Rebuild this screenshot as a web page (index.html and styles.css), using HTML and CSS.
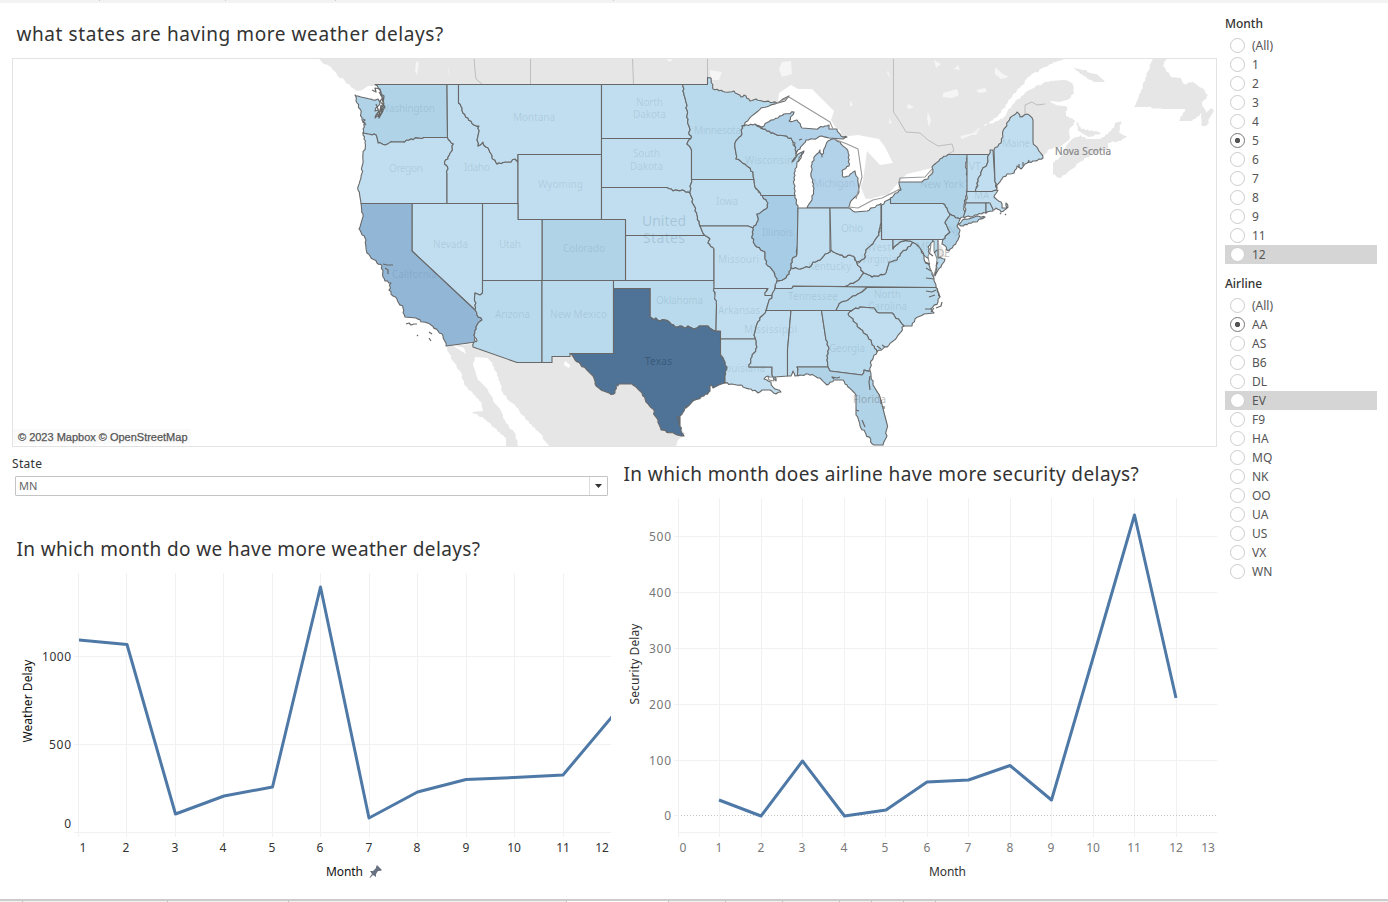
FILE: index.html
```html
<!DOCTYPE html>
<html lang="en">
<head>
<meta charset="utf-8">
<title>Flight delays</title>
<link rel="stylesheet" href="styles.css">
</head>
<body>
<div class="topstrip"><i></i><i></i><i></i><i></i></div>
<div class="dashboard">
<main class="content">
<h1 class="title title-map">what states are having more weather delays?</h1>
<svg class="map" viewBox="12 58 1205 389" width="1205" height="389">
<g class="land">
<path d="M317 58L324 64 331 67 337 75 345 81 352 88 358 91 367 92 374 96 380 90 385 100 640 100 700 100 745 120 790 100 840 130 850 160 866 200 905 192 960 180 1000 160 1042 157 1050 149 1060 147 1070 138 1069 130 1076 121 1066 116 1067 107 1056 105 1050 101 1060 102 1069 99 1074 92 1073 84 1064 80 1050 81 1036 86 1025 93 1013 104 1004 117 997 121 984 126 969 136 981 128 998 116 1010 99 1021 86 1030 76 1048 66 1058 61 1071 58Z"/>
<path d="M1073 68L1084 70 1098 75 1105 82 1094 82 1084 76Z"/>
<path d="M1153 58L1167 58 1163 66 1171 77 1181 78 1184 84 1193 82 1202 88 1208 95 1202 103 1206 113 1211 108 1214 111 1206 126 1201 125 1202 113 1192 121 1179 121 1185 109 1163 109 1148 107 1134 107 1139 96 1144 82Z"/>
<path d="M1074 138L1081 135 1086 139 1100 139 1108 134 1117 122 1121 121 1119 132 1127 136 1121 141 1108 143 1108 150 1092 154 1080 162 1067 173 1059 178 1053 174 1053 163 1061 156 1066 147Z"/>
<path d="M1077 122L1081 129 1096 131 1101 133 1089 137 1078 131Z"/>
<path d="M446 346L473 344 600 350 660 400 685 434 679 439 675 447 550 447 538 431 525 418 516 407 503 394 500 382 494 367 488 358 475 357 473 364 478 380 488 390 493 400 501 411 506 423 514 432 519 447 506 447 506 438 495 428 486 420 472 412 483 411 481 402 464 384 460 371 452 360Z"/>
<path d="M938 240L946 257 938 258Z"/>
</g>
<g class="patch">
<path d="M416 61l3 2-2 12-2-4zM448 67l2 12-2-8zM666 59l8-1-4 4zM710 70l12 2-3 8-8 0zM782 62l9-1 1 13-10 3-3-8zM850 100l3 5-3 2zM908 104l6 3-5 2-2-2zM928 112l3 8-2 7-2-9zM943 93l14-4 2 6-7 3-9-1zM976 90l9-2 2 4-8 1zM995 67l8 7 6 3-8 2-6-5zM934 60l7 4-5 4zM954 69l4-4 2 5zM888 70l2 8-3-5zM889 118l3 5-3 1zM972 135l7-5-3 5zM960 136l18-4-16 7z"/>
<path d="M740 127L752 113 762 108 778 102 779 93 791 85 798 89 812 89 821 98 829 106 834 111 831 120 837 130 841 137 858 135 879 139 885 147 893 163 880 165 867 151 863 181 855 200 850 207 868 209 900 190 889 194 873 198 861 207 862 199 885 198 899 182 907 174 932 168 928 177 922 183 905 184 899 183 898 190 880 204 866 215 852 214 845 180 835 150 829 142 820 155 816 165 812 183 815 198 808 209 798 208 793 190 797 166 804 157 798 150 795 138 768 130Z"/>
<path d="M368 86L381 86 387 101 383 113 375 116 378 101 366 99 356 94Z"/>
<path d="M452 345l12 3 2 6-6-4zM565 361l5 4-1 3-5-3z"/>
</g>
<g class="province">
<path d="M474 58L475 70 476 79 482 84M530.5 58V84M632.5 58L633.5 84M707.5 58V78M893.5 58V112L900 122 906 132 920 133 928 140 938 146 952 144 954 151 948 154M1020 117L1025 114 1025 105 1032 102 1037 105 1045 104"/>
</g>
<g class="states">
<path class="s3" d="M355 95L356 101 360 109 362 120 365 123 363 133 368 134 376 135 378 143 385 145 393 142 402 142 411 139 424 137.5 447.5 137.5 447 84.5 375 84.5 380 90 382 97 384 103 381 114 375 118 379 110 375 111 380 103 378 99 373 100 358 96Z"/>
<path class="s1" d="M363 133L368 134 376 135 378 143 385 145 393 142 402 142 411 139 424 137.5 447.5 137.5 450 141 453.5 144 451 152 448 157 444.5 164 448 169 447 174 447 203.5 361 203.5 358 190 361 178 363 160 365 143Z"/>
<path class="s1" d="M447 84.5H458.5V103L462 108 463 113 474 125 479 126 477 140 478 146 483 142 486 147 489 150 492 158 495 160 497 164 505 162 511 162 515 159 518 162V203.5H447V174L448 169 444.5 164 448 157 451 152 453.5 144 450 141 447.5 137.5Z"/>
<path class="s1" d="M458.5 84.5H601.5V154.5H518V162L515 159 511 162 505 162 497 164 495 160 492 158 489 150 486 147 483 142 478 146 477 140 479 126 474 125 463 113 462 108 458.5 103Z"/>
<path class="s1" d="M518 154.5H601.5V219.5H518Z"/>
<path class="s1" d="M601.5 84.5H683L684 95 687 110 688 124 691 138.5H601.5Z"/>
<path class="s1" d="M601.5 138.5H691L687 144 691.5 150V179.5L690 193 682 190 673 191 667 187.5H601.5Z"/>
<path class="s1" d="M601.5 187.5H667L673 191 682 190 690 193 697 215 700 226 705 235.5H625.5V219.5H601.5Z"/>
<path class="s1" d="M625.5 235.5H705L710 239 708 243 714 249V280.5H625.5Z"/>
<path class="s3" d="M542 219.5H625.5V280.5H542Z"/>
<path class="s1" d="M482.5 203.5H518V219.5H542V280.5H482.5Z"/>
<path class="s1" d="M412 203.5H482.5V293L480 295 475 293 474.5 298 476 303 475 310 412 251Z"/>
<path class="s5" d="M361 203.5L363 214 359 229 366 240 367 253 370 256 377 263 382 266 383 277 385 281 391 283 389 290 393 296 397 299 403 308 405 317 416 318 423 322 431 325 438 331 443 336 446 346 476 342 474 335 477 325 482 320 477 315 475 310 412 251V203.5Z"/>
<path class="s2" d="M482.5 280.5H542V362.5H517L473 347 474 342 477 341 474 335 477 325 482 320 477 315 475 310 476 303 474.5 298 475 293 480 295 482.5 293Z"/>
<path class="s2" d="M542 280.5H613.5V353.5H570V356.5H552V362.5H542Z"/>
<path class="s2" d="M613.5 280.5H714L714.5 289 716.5 305 716 331 708 326 699 326 693 329 688 326 684 328 680 326 675 327 671 324 665 320 660 321 656 318 653 319 650 317V288.5H613.5Z"/>
<path class="s6" d="M613.5 288.5H650V317L653 319 656 318 660 321 665 320 671 324 675 327 680 326 684 328 688 326 693 329 699 326 708 326 716 331 720.5 331V353L724 360 727 367 725 376 725 383 713 388 710 385 710 391 704 396 695 400 687 407 684 411 680 416 680 424 681 430 684 436 675 434 661 430 658 420 655 416 653 409 646 402 642 393 637 388 632 384 619 384 616 386 615 393 611 394.5 600 389 595 384 593 376 586 369 575 360 570 353.5H613.5Z"/>
<path class="s2" d="M683 84.5H707.5V77.5L711 78 713 89 725 92 734 91 741 97 744 95 750 101 756 99 762 101 777 103 769 106 761 108 749 119 742 126 741 136 735 143 736 159 745 164 753 172 754 179.5H691.5V150L687 144 691 138.5 688 124 687 110 684 95Z"/>
<path class="s1" d="M691.5 179.5H754L755 187 762 195 768 203 766 209 757 214 758 221 753 228 748 226H700L697 215 690 193Z"/>
<path class="s1" d="M700 226H748L753 228 752 238 757 247 765 252 765 259 768 266 774 272 778 280 775 288 772 295.5H764L768 288.5H714V249L708 243 710 239 705 235.5Z"/>
<path class="s1" d="M714 288.5H767L765 295.5H772L766 310.5 762 316 757 324 754 335 755.5 339H720.5V331L716 331 716.5 305Z"/>
<path class="s1" d="M720.5 339H755.5L757 347 752 357 749 367H772L772 375 775 377 776 381 768 376 764 379 771 382 773 387 781 392 776 394 770 390 762 390 758 393 751 389 743 387 740 385 731 384 725 383 725 376 727 367 724 360 720.5 353Z"/>
<path class="s1" d="M766 310.5H791L787.5 350V376L775 377 772 375 772 367H749L752 357 757 347 755.5 339 754 335 757 324 762 316Z"/>
<path class="s1" d="M791 310.5H821.5L826 340 829 349 827 360 828 367H797L799 375 795 376 793 371 791 376H787.5V350Z"/>
<path class="s2" d="M766 310.5H836L839 304 846 301 853 296 860 293 867 287 793 286 791 288.5H775L772 295.5Z"/>
<path class="s1" d="M777 281L784 279 789 274 791 268 800 269 811 266 813 262 820 260 825 254 830 252 831 250 838 254 846 257 850 255 853 256 857 263 864 273 857 281 845 286.5 793 286 791 288.5H775Z"/>
<path class="s4" d="M761 195.5H795L798 208V242L797 254 792 260 791 268 789 274 784 279 777 281 774 272 768 266 765 259 765 252 757 247 752 238 753 228 758 221 757 214 766 209 768 203 762 195Z"/>
<path class="s2" d="M761 195.5L755 187 754 179.5 753 172 745 164 736 159 735 143 741 136 742 126 755 124 763 129 775 134 791 138 796 149 796 157 792 162 800 153 804 151 799 158 795 169 794 184 795 195.5Z"/>
<path class="s3 lake" d="M756 125L762 127 771 120 778 118 784 114 794 112 789 121 797 120 802 128 815 129 825 126 829 125 829 129 837 129 841 136 847 137 843 139 829 138 822 136 813 139 806 140 800 149 796 154 795 143 791 138 775 134 763 129Z"/>
<path class="s3 lake" d="M832 139L840 142 848 151 849 166 842 171 843 177 849 176 855 171 858 178 859 192 850 203 848 208H807L812 200 814 188 811 176 812 162 817 154 820 150 822 157 824 149 828 141Z"/>
<path class="s1" d="M798 208H830V252L825 254 820 260 813 262 811 266 800 269 791 268 792 260 797 254Z"/>
<path class="s1" d="M830 208H848L855 212 867 211 881 203.5V223L879 235 873 244 866 250 864 259 857 262 853 256 850 255 846 257 838 254 831 250Z"/>
<path class="s1" d="M881.5 205L891 198V203.5H943L947 208 950 214 945 223 950 232 943 239.5H881.5Z"/>
<path class="s3" d="M890.5 198L901 190 899 182 922 182 928 179 933 172 932 167 940 159 948 154.5H967L966 165 968 179 967 190 964 205 965 216 960 219 950 214 947 208 943 203.5H890.5Z"/>
<path class="s3" d="M958 224L965 219 977 216 985 217 975 222 961 226Z"/>
<path class="s3" d="M950 214L960 219 957 226 960 230 958 240 949 251 942 244 943 239.5 950 232 945 223Z"/>
<path class="s2" d="M864 273L872 277 885 274 889 262 897 260 902 252 907 249 913 241 921 248 924 259 930 268 934 278 936 287.5 845 286.5 857 281Z"/>
<path class="s1" d="M881.5 223V239.5H893V249L900 242 908 241 913 241 907 249 902 252 897 260 889 262 885 274 872 277 864 273 857 263 864 259 866 250 873 244 879 235Z"/>
<path class="s2" d="M893 239.5H938V258L945 259 941 267 935 276 937 263 933 252 933 240 928 247 932 262 924 255 916 244 908 241 900 242 893 249Z"/>
<path class="s2" d="M836 310.5H852L860 307 874 308 879 313H892L904 326H912L915 319 924 314 934 313 931 309 938 302 940 297 936 287.5H867L860 293 853 296 846 301 839 304Z"/>
<path class="s1" d="M852 310.5L860 307 874 308 879 313H892L904 326 897 337 889 345 877 352 868 337 859 328 848 314Z"/>
<path class="s2" d="M821.5 310.5H852L848 314 859 328 868 337 877 352 871 361 870 371 864 370 862 375 830 371 828 367 827 360 829 349 826 340Z"/>
<path class="s3" d="M797 367H828L830 371 862 375 864 370 870 371 873 385 880 397 887 424 886 438 883 445H874L866 434 860 426 856 415 856 395 848 387 843 380 834 380 827 385 820 378 808 374 798 376Z"/>
<path class="s1" d="M967 154.5H989L987 164 982 170 978 179 976 191.5H967Z"/>
<path class="s1" d="M989 154.5L990 150 993 150 995 182 997 188 992 192H976L978 179 982 170 987 164Z"/>
<path class="s1" d="M994 150L1001 143 1003 131 1010 118 1017 112 1020 117 1027 114 1033 120V142L1038 149 1043 158 1035 161 1025 164 1021 169 1017 166 1014 173 1007 174 998 184 997 188 995 182Z"/>
<path class="s1" d="M967 191.5H992L998 190 994 197 1001 202 1002 208 1007 208 1006 203 1008 207 1001 212 996 208 992 210 989 203H966Z"/>
<path class="s2" d="M966 203H986V213L975 215 964 218Z"/>
<path class="s2" d="M986 203H990L993 211 986 213Z"/>
<path class="bay" d="M931 243l3-2 0 10 3 8-1 9-2 8-4-8-2-12 2-4zM768 377l5 0 1 4-5-1z"/>
<path class="inlet" d="M372 90l4 2-1-4 5 1 1 5 3 2-1 8 2 3-5 8-1 2 2-12M379 92l4 6-3 3 3 4-3 7M376 104l3 8-3 4M381 105l2 6-4 7-1-4M363 119l2 1-2 2 3 3M383 264l4 1 6 0M385 268l3 2 0 4M406 324l3-1 2 2 3-1 3 0M417 335l1 1M429 332l3 2M429 338l2 3M778 103l5-4 6-3-4 5zM679 416l-2 2 3 1M678 420l2 6M687 408l-2-2M693 401l-1-2M870 376l-1 6 1 8M856 410l3 1M862 420l3 7M881 400l0 4M884 409l0-3M834 379l-2-2 5 1 3-1M929 253l4 3M925 262l5 2M926 268l5 3M926 278l8 1M937 250l-3 3M938 262l-2 4M926 291l6 1 4-2M929 297l6-2M925 309l6 0M931 312l3-4M936 308l5-2 1-4M937 289l3 8M1000 213l1 1M1005 214l1 1M802 152l-1 6-3 4M799 140l3-1M881 349l-4-3M885 347l-3-2M1019 168l0-4M1023 166l0-4M1028 163l1-3"/>
<path class="border" d="M777 103L789 97 830 122 833 129M834 139L847 144 858 149 862 177 856 199M848 207L858 208 873 200 882 198 900 189M899 182L900 178 925 177 932 169"/>
</g>
<g class="labels">
<text x="380" y="112" textLength="55">Washington</text><text x="389" y="172" textLength="34">Oregon</text><text x="464" y="171" textLength="26">Idaho</text><text x="513" y="121" textLength="42">Montana</text><text x="538" y="188" textLength="45">Wyoming</text><text x="636" y="105.500" textLength="27">North</text><text x="633" y="118" textLength="33">Dakota</text><text x="633" y="157" textLength="27">South</text><text x="630" y="169.500" textLength="33">Dakota</text><text x="694" y="134" textLength="47">Minnesota</text><text x="745" y="164" textLength="48">Wisconsin</text><text x="813" y="187" textLength="42">Michigan</text><text x="716" y="205" textLength="22">Iowa</text><text x="762" y="236" textLength="31">Illinois</text><text x="841" y="232" textLength="22">Ohio</text><text x="920" y="188" textLength="44">New York</text><text x="433" y="248" textLength="35">Nevada</text><text x="499" y="248" textLength="22">Utah</text><text x="563" y="252" textLength="42">Colorado</text><text x="392" y="278" textLength="45">California</text><text x="495" y="318" textLength="35">Arizona</text><text x="550" y="318" textLength="57">New Mexico</text><text x="656" y="304" textLength="47">Oklahoma</text><text x="718" y="263" textLength="41">Missouri</text><text x="718" y="314" textLength="42">Arkansas</text><text x="744" y="333" textLength="53">Mississippi</text><text x="720" y="372" textLength="45">Louisiana</text><text class="tx" x="645" y="365" textLength="27">Texas</text><text x="788" y="300" textLength="50">Tennessee</text><text x="808" y="270" textLength="43">Kentucky</text><text x="867" y="251" textLength="24">West</text><text x="861" y="263" textLength="36">Virginia</text><text x="874" y="298" textLength="27">North</text><text x="868" y="310" textLength="39">Carolina</text><text x="829" y="352" textLength="36">Georgia</text><text x="853" y="403" textLength="33" class="out">Florida</text><text x="1002" y="147" textLength="28">Maine</text><text x="969" y="170">VT</text><text x="974" y="199">MA</text><text x="916" y="250">MD</text><text x="948" y="234">NJ</text><text x="937" y="257" class="out">DE</text>
<text class="country" x="642" y="226" textLength="44">United</text><text class="country" x="643" y="243" textLength="42">States</text>
<text class="nova" x="1055" y="155" textLength="56">Nova Scotia</text>
</g>
<rect class="credit-bg" x="13" y="429" width="178" height="15"/>
<text class="credit" x="18" y="441" textLength="169.500">© 2023 Mapbox © OpenStreetMap</text>
<rect class="frame" x="12.500" y="58.500" width="1204" height="388"/>
</svg>
<div class="lower">
<section class="left">
<div class="param-label">State</div>
<div class="select"><span>MN</span><b><svg width="7" height="4" viewBox="0 0 7 4"><path d="M0 0H7L3.500 4Z"/></svg></b></div>
<h2 class="title title-weather">In which month do we have more weather delays?</h2>
<svg class="chart" viewBox="12 565 600 325" width="600" height="325">
<path class="grid" d="M78.500 573V837M126.500 573V837M175.500 573V837M223.500 573V837M272.500 573V837M320.500 573V837M369.500 573V837M417.500 573V837M466.500 573V837M514.500 573V837M563.500 573V837M74 656.500H611M74 744.500H611M74 832.500H611"/>
<svg x="79" y="573" width="532" height="264" viewBox="79 573 532 264"><path class="line" d="M77 640L79 640 127 644.500 175.500 814 224 796 272.500 787 320.500 587 369 818 417.500 792 466 779.500 514 777.500 563 775 611 718 613 715.500"/></svg>
<g class="axis dark"><g class="end"><text x="71" y="661" textLength="29">1000</text><text x="71" y="749" textLength="22">500</text><text x="71" y="828">0</text></g>
<text x="83" y="852">1</text><text x="126" y="852">2</text><text x="175" y="852">3</text><text x="223" y="852">4</text><text x="272" y="852">5</text><text x="320" y="852">6</text><text x="369" y="852">7</text><text x="417" y="852">8</text><text x="466" y="852">9</text><text x="514" y="852">10</text><text x="563" y="852">11</text><text x="602" y="852">12</text>
<text class="name" x="344.500" y="876" textLength="37">Month</text><text class="name" transform="translate(32 701) rotate(-90)" textLength="83">Weather Delay</text></g>
<path class="pin" d="M377 865L382 870 380 871 378 871 376 874 376 877 373 875 370 878 369.500 877.500 372 874 370 871 373 871 376 868 376 867Z"/>
</svg>
</section>
<section class="right">
<h2 class="title title-security">In which month does airline have more security delays?</h2>
<svg class="chart" viewBox="620 490 597 400" width="597" height="400">
<path class="grid" d="M678.500 498V837M719.500 498V837M761.500 498V837M802.500 498V837M844.500 498V837M885.500 498V837M927.500 498V837M968.500 498V837M1010.500 498V837M1051.500 498V837M1093.500 498V837M1134.500 498V837M1176.500 498V837M674 536.500H1217M674 592.500H1217M674 648.500H1217M674 704.500H1217M674 760.500H1217M674 815.500H679M678 832.500H1217"/>
<path class="zero" d="M681 815.500H1217"/>
<path class="line" d="M719 800L761 816 802.500 761 844.500 816 886 810 927 782 968.500 780 1010 765.500 1051.500 800 1093 658 1134.500 515 1176 698"/>
<g class="axis"><g class="end"><text x="671" y="541" textLength="22">500</text><text x="671" y="597" textLength="22">400</text><text x="671" y="653" textLength="22">300</text><text x="671" y="709" textLength="22">200</text><text x="671" y="765" textLength="22">100</text><text x="671" y="820">0</text></g>
<text x="683" y="852">0</text><text x="719" y="852">1</text><text x="761" y="852">2</text><text x="802" y="852">3</text><text x="844" y="852">4</text><text x="885" y="852">5</text><text x="927" y="852">6</text><text x="968" y="852">7</text><text x="1010" y="852">8</text><text x="1051" y="852">9</text><text x="1093" y="852">10</text><text x="1134" y="852">11</text><text x="1176" y="852">12</text><text x="1208" y="852">13</text>
<text class="name" x="947.500" y="876" textLength="37">Month</text><text class="name" transform="translate(639 664) rotate(-90)" textLength="81">Security Delay</text></g>
</svg>
</section>
</div>
</main>
<aside class="filters">
<h3>Month</h3>
<ul><li>(All)</li><li>1</li><li>2</li><li>3</li><li>4</li><li class="on">5</li><li>6</li><li>7</li><li>8</li><li>9</li><li>11</li><li class="hl">12</li></ul>
<h3>Airline</h3>
<ul><li>(All)</li><li class="on">AA</li><li>AS</li><li>B6</li><li>DL</li><li class="hl">EV</li><li>F9</li><li>HA</li><li>MQ</li><li>NK</li><li>OO</li><li>UA</li><li>US</li><li>VX</li><li>WN</li></ul>
</aside>
</div>
<div class="tabs"><i class="w22"></i><i class="w145"></i><i class="w121"></i><i class="w278"></i><i class="active"></i><i class="w57"></i><i class="w57"></i><i class="w57"></i><i class="w32"></i><i class="w32"></i><i class="w32"></i></div>
<script src="coast.js"></script>
</body>
</html>
```
FILE: styles.css
```css
* { box-sizing: border-box; }
body { margin: 0; width: 1388px; height: 902px; overflow: hidden; background: #fff; color: #333; font-family: "Noto Sans", "Open Sans", sans-serif; font-size: 12px; display: flex; flex-direction: column; }
.topstrip { height: 3px; flex: none; background: #f3f3f3; display: flex; }
.topstrip i { width: 110px; height: 1px; border-right: 1px solid #ccc; }
.topstrip i:first-child { width: 100px; }
.topstrip i:nth-child(2) { width: 126px; }
.topstrip i:nth-child(4) { width: 278px; }
.dashboard { display: flex; gap: 8px; height: 896px; flex: none; }
.content { width: 1217px; padding-left: 12px; }
.title { margin: 0; font-weight: 400; font-size: 19px; line-height: 30px; color: #333; white-space: nowrap; }
.title-map { height: 55px; padding: 16px 0 0 4.5px; letter-spacing: .58px; }
.map { display: block; }
.lower { display: flex; }
.left { width: 608px; padding-top: 9px; }
.right { width: 597px; padding-top: 12px; }
.param-label { height: 20px; line-height: 16px; letter-spacing: .3px; }
.select { width: 593px; height: 20px; margin-left: 3px; border: 1px solid #c4c4c4; border-radius: 1px; display: flex; color: #666; line-height: 18px; padding-left: 3px; font-size: 11px; }
.select span { flex: 1; }
.select b { width: 18px; border-left: 1px solid #ddd; display: flex; align-items: center; justify-content: center; }
.select path { fill: #333; }
.title-weather { padding-left: 4.5px; margin-top: 38px; height: 31px; letter-spacing: .36px; }
.title-security { padding-left: 3.5px; height: 31px; letter-spacing: .41px; }
.chart { display: block; }
.grid { fill: none; stroke: #f1f1f1; }
.zero { stroke: #c4c4c4; stroke-dasharray: 1 2; }
.line { fill: none; stroke: #4e79a7; stroke-width: 3; stroke-linejoin: round; }
.axis { font-size: 12px; fill: #787878; text-anchor: middle; }
.dark { fill: #333; }
.end { text-anchor: end; }
.axis .name { fill: #333; }
.dark .name { fill: #111; }
.pin { fill: #687282; }
.land path { fill: #e6e6e6; }
.patch path { fill: #fff; }
.patch path:first-child { fill: #f5f5f5; }
.province { fill: none; stroke: #bebebe; }
.states path { stroke: #686868; stroke-width: 1.1; stroke-linejoin: round; }
.states .s1 { fill: #c0deef; }
.states .s2 { fill: #b9daec; }
.states .s3 { fill: #b0d3e8; }
.states .s4 { fill: #a7cce5; }
.states .s5 { fill: #92b6d6; }
.states .s6 { fill: #4e7397; }
.states .lake { fill: #b2d2ea; }
.states .bay { fill: #fff; stroke-width: .8; }
.states .inlet { fill: none; stroke-width: 1.2; }
.states .border { fill: none; stroke: #999; }
.labels { font-size: 10px; fill: #4b6a85; fill-opacity: .17; }
.labels .country { font-size: 14px; fill-opacity: .22; }
.labels .nova { fill: #888; fill-opacity: 1; stroke: #888; stroke-width: .2; }
.labels .out { fill: #777; fill-opacity: .5; }
.labels .tx { fill: #1c3048; fill-opacity: .4; }
.credit-bg { fill: #fafafa; }
.credit { font: 11px "Liberation Sans", sans-serif; fill: #555; stroke: #555; stroke-width: .25; }
.frame { fill: none; stroke: #e3e3e3; }
.filters { width: 152px; padding-top: 12px; }
.filters h3 { margin: 0; font-size: 12px; font-weight: 500; line-height: 17px; height: 21px; }
.filters ul { list-style: none; margin: 0 0 11px; padding: 0; }
.filters li { height: 19px; line-height: 19px; display: flex; align-items: center; padding-left: 6px; gap: 8px; color: #555; }
.filters li::before { content: ""; width: 13px; height: 13px; margin: 0 -1px; border-radius: 50%; border: 1px solid #ccc; background: #fff; }
.filters li.on::before { border-color: #777; background: radial-gradient(circle, #555 2.3px, #fff 3px); }
.filters li.hl { background: #d5d5d5; }
.tabs { height: 3px; flex: none; border-top: 2px solid #ccc; background: #f1f1f1; display: flex; }
.tabs i { border-right: 1px solid #bbb; }
.w22 { width: 23px; } .w145 { width: 145px; } .w121 { width: 121px; } .w278 { width: 278px; }
.active { width: 102px; background: #fff; } .w57 { width: 57px; } .w32 { width: 32px; }
```
FILE: coast.js
```js
// Adds fine irregularity to rivers and coasts. The offset depends only on a
// segment's endpoints, so neighbouring shapes keep sharing the same border.
function wobble(a, b) {
  const dx = b[0] - a[0], dy = b[1] - a[1], len = Math.hypot(dx, dy);
  if (Math.abs(dx) < 0.6 || Math.abs(dy) < 0.6 || len < 3 || len > 26) return [b];
  if (Math.abs(dy) / len < 0.1) return [b];
  const flip = a[0] > b[0] || (a[0] === b[0] && a[1] > b[1]);
  const p = flip ? b : a, q = flip ? a : b;
  const ux = (q[0] - p[0]) / len, uy = (q[1] - p[1]) / len;
  const n = Math.max(2, Math.round(len / 2.2)), out = [];
  for (let i = 1; i < n; i++) {
    const s = Math.sin(p[0] * 12.9 + p[1] * 78.2 + q[0] * 3.7 + i * 37.7) * 43758.5;
    const off = (s - Math.floor(s) - 0.5) * 1.9, t = (len * i) / n;
    out.push([p[0] + ux * t - uy * off, p[1] + uy * t + ux * off]);
  }
  if (flip) out.reverse();
  out.push(b);
  return out;
}

document.querySelectorAll(".states [class^=s], .land path").forEach((path) => {
  const tokens = path.getAttribute("d").match(/[MLHVZ]|[\d.]+/g);
  const pts = [];
  let cmd = "", cur = [0, 0];
  for (let i = 0; i < tokens.length;) {
    if (/[MLHVZ]/.test(tokens[i])) { cmd = tokens[i++]; continue; }
    let next;
    if (cmd === "H") next = [+tokens[i++], cur[1]];
    else if (cmd === "V") next = [cur[0], +tokens[i++]];
    else next = [+tokens[i++], +tokens[i++]];
    if (pts.length) pts.push(...wobble(cur, next)); else pts.push(next);
    cur = next;
  }
  pts.push(...wobble(cur, pts[0]));
  path.setAttribute("d", "M" + pts.map((p) => p[0].toFixed(1) + " " + p[1].toFixed(1)).join("L") + "Z");
});
```
